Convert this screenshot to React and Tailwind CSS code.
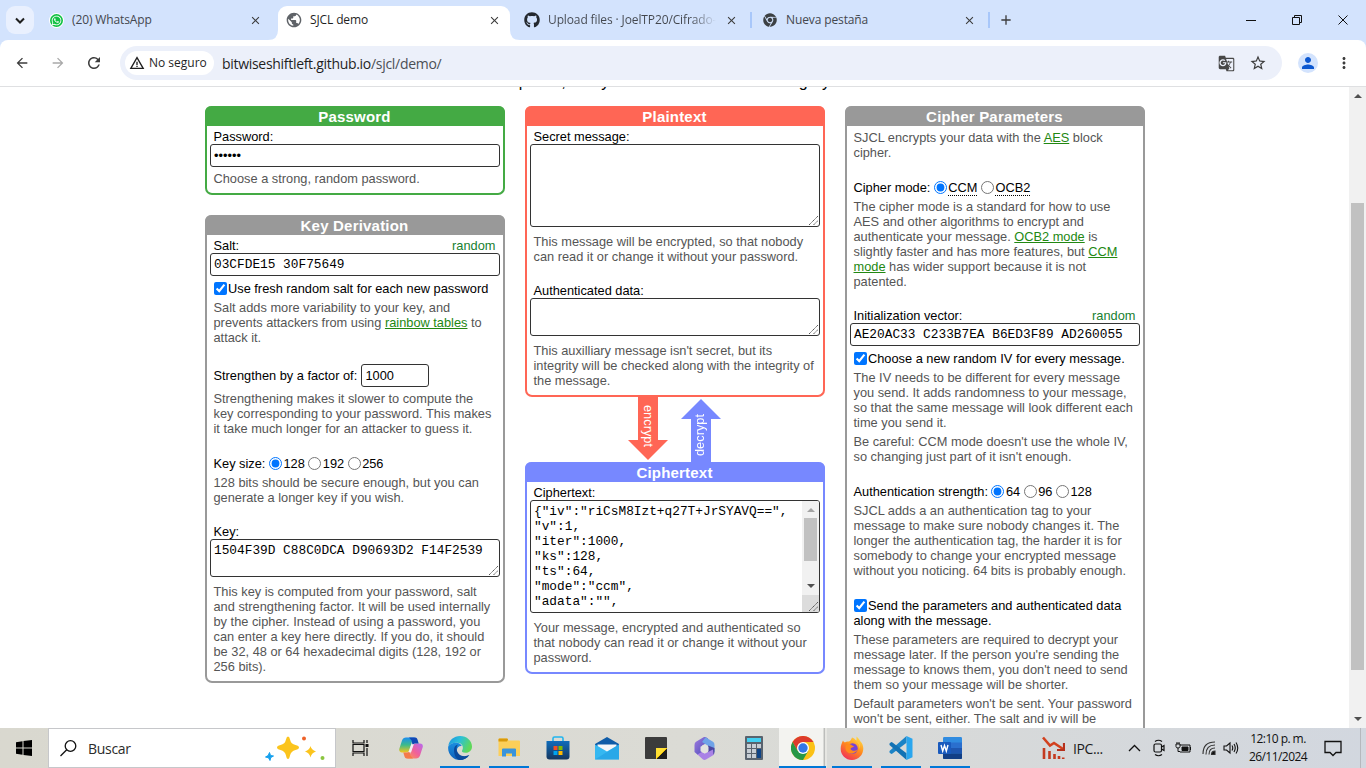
import React from "react";
import { FaWhatsapp, FaGithub, FaChrome } from "react-icons/fa";
import { MdPublic, MdGTranslate, MdPerson, MdStarBorder, MdMoreVert, MdArrowBack, MdArrowForward, MdRefresh, MdWarningAmber, MdClose, MdAdd } from "react-icons/md";

function Lines({ items, className = "" }) {
  return (
    <div className={"px-[6.5px] text-[#555555] " + className}>
      {items.map((t, i) => (
        <div key={i} className="h-[15px] whitespace-nowrap">{t}</div>
      ))}
    </div>
  );
}

function Label({ children, random, className = "" }) {
  return (
    <div className={"flex h-[15px] items-center justify-between whitespace-nowrap pl-[6.5px] pr-[7.5px] text-black " + className}>
      <span>{children}</span>
      {random && <span className="text-[#188030]">random</span>}
    </div>
  );
}

function Link({ children }) {
  return <span className="text-[#228811] underline">{children}</span>;
}

function Panel({ title, head, border, children, className = "" }) {
  return (
    <section className={"w-[300px] rounded-[7px] border-2 border-t-0 " + border + " " + className}>
      <h2 className={"-mx-[2px] flex h-5 items-center justify-center rounded-t-[6px] text-[15px] font-bold tracking-[0.2px] text-white " + head}>
        <span className="pt-px pr-px">{title}</span>
      </h2>
      {children}
    </section>
  );
}

const field = "mx-[3px] block w-[290px] rounded-[3px] border border-[#333333] bg-white outline-none ";
const mono = "font-['Liberation_Mono','Courier_New',monospace] text-[12.8px] text-black ";

function Box({ children, className = "" }) {
  return <div className={field + "flex h-[23px] items-center pl-[3px] whitespace-pre " + className}>{children}</div>;
}

function Grip({ className = "" }) {
  return (
    <svg className={className} width="9" height="9" viewBox="0 0 9 9">
      <path d="M0 9L9 0M4.500 9L9 4.500" stroke="#555" strokeWidth="1" strokeDasharray="1.400 .5" />
    </svg>
  );
}

function Area({ children, className = "" }) {
  return (
    <div className={field + mono + "relative px-[3px] pt-[3px] leading-[15px] whitespace-pre " + className}>
      {children}
      <Grip className="absolute right-[1px] bottom-[1px]" />
    </div>
  );
}

function Radio({ on, children }) {
  return (
    <>
      <input type="radio" defaultChecked={on} className="ml-[3.500px] mr-[1.500px] size-[13px]" />
      <span>{children}</span>
    </>
  );
}

function Check({ children, className = "" }) {
  return (
    <div className={"flex h-[15px] items-center whitespace-nowrap pl-[7px] text-black " + className}>
      <input type="checkbox" defaultChecked className="mr-px size-[13px]" />
      <span>{children}</span>
    </div>
  );
}

function Tab({ icon, title, active, className = "" }) {
  return (
    <div className={"flex h-10 items-center " + className}>
      <span className="flex size-4 items-center justify-center">{icon}</span>
      <span className={"ml-2 grow overflow-hidden text-[12px] tracking-[-0.12px] whitespace-nowrap " + (active ? "text-[#1f1f1f]" : "text-[#43474e]")}>{title}</span>
      <MdClose className="size-[13px] text-[#3c3c3c]" />
    </div>
  );
}

function Slot({ children, on, active }) {
  return (
    <div className="relative flex h-10 w-[49px] items-center justify-center">
      {active && <div className="absolute inset-y-0 left-px w-[44px] bg-[#f3f3f0]" />}
      {active && <div className="absolute inset-y-0 left-[46px] w-[3px] border-l border-[#bcbdbb] bg-[#e6e6e2]" />}
      <div className="relative">{children}</div>
      {on && <div className={"absolute bottom-0 h-[2px] bg-[#0078d7] " + (active ? "inset-x-px" : "inset-x-[4.500px]")} />}
    </div>
  );
}

function Copilot() {
  return (
    <svg width="24" height="24" viewBox="0 0 24 24">
      <defs>
        <linearGradient id="cp1" x1="0" y1="0" x2="0" y2="1"><stop offset="0" stopColor="#1b8df0" /><stop offset=".5" stopColor="#3dbb8a" /><stop offset="1" stopColor="#f4c51b" /></linearGradient>
        <linearGradient id="cp2" x1="1" y1="0" x2="0" y2="1"><stop offset="0" stopColor="#b66af0" /><stop offset=".5" stopColor="#f0609a" /><stop offset="1" stopColor="#ff9d4a" /></linearGradient>
      </defs>
      <path d="M7 1.500h10c-2 0-3 1-3.600 3l-3 9c-.6 2-1.400 3-3.400 3H3c-2.500 0-3.300-2-2.600-4L3 4.500c.7-2 2-3 4-3z" fill="url(#cp1)" />
      <path d="M17 22.500H7c2 0 3-1 3.600-3l3-9c.6-2 1.400-3 3.400-3h4c2.500 0 3.300 2 2.600 4L21 19.500c-.7 2-2 3-4 3z" fill="url(#cp2)" />
      <path d="M10 1.500h6c1.800 0 2.300 1.200 2.800 3l.9 3H17c-2 0-2.800.5-3.400 2l-1-5z" fill="#1248b5" />
      <path d="M14 22.500H8c-1.800 0-2.300-1.200-2.800-3l-.9-3H7c2 0 2.800-.5 3.400-2l1 5z" fill="#f47a4a" />
      <path d="M12.400 8.300h2.400l-2.700 8H9.500z" fill="#f3eef2" />
    </svg>
  );
}

function Edge() {
  return (
    <svg width="24" height="24" viewBox="0 0 24 24">
      <defs>
        <linearGradient id="ed1" x1="0" y1="0" x2="1" y2=".4"><stop offset="0" stopColor="#1c8fe0" /><stop offset=".5" stopColor="#2bc0d8" /><stop offset="1" stopColor="#5fd85a" /></linearGradient>
        <linearGradient id="ed2" x1="0" y1="0" x2="0" y2="1"><stop offset="0" stopColor="#1a8ee0" /><stop offset="1" stopColor="#1160b8" /></linearGradient>
      </defs>
      <path d="M.3 10C1 4.200 6 0 12 0c7 0 12 5 12 10.500 0 4-3 6.300-6.500 6.300-3 0-4.200-1.300-3.300-2.500 1.800-2.500.3-7.500-5-7.500C5 6.800 1.500 8.500.3 10z" fill="url(#ed1)" />
      <path d="M.2 10.500C2 7.500 5.500 6.500 8.500 6.800c2.500.2 4.500 1.500 5.300 3.200-2.500-.5-5 1.500-5 4.500 0 5 6 8 12.500 4.500C19 22.300 15.500 24 12 24 5 24-.6 18 .2 10.500z" fill="url(#ed2)" />
      <path d="M6 14c0-3 1.500-5 4-5.500-2 2-2 5.500 0 8.500 2.500 3.500 7.500 4 11.300 2C19 22.300 15.500 24 12 24c-4-.5-6-5-6-10z" fill="#0b4a9c" />
    </svg>
  );
}

function Explorer() {
  return (
    <svg width="22" height="20" viewBox="0 0 22 20">
      <path d="M.500 1.500a1 1 0 0 1 1-1H9l1.500 2H21a1 1 0 0 1 1 1V18H.5z" fill="#fccf59" />
      <path d="M.500 1.300A1 1 0 0 1 1.500.5H9q1 0 1 1.300L9 3.500H.5z" fill="#d99a0b" />
      <path d="M4 18.500v-7q0-1 1-1h12q1 0 1 1v7h-4v-3H8v3z" fill="#3a94dc" />
    </svg>
  );
}

function Store() {
  return (
    <svg width="24" height="24" viewBox="0 0 24 24">
      <defs><linearGradient id="st" x1="0" y1="0" x2="0" y2="1"><stop offset="0" stopColor="#0f6cbb" /><stop offset="1" stopColor="#16375f" /></linearGradient></defs>
      <path d="M7 6V2.500Q7 1 8.500 1h7Q17 1 17 2.500V6" fill="none" stroke="#22b5ee" strokeWidth="1.600" />
      <path d="M.5 5h23v15.500q0 3-3 3h-17q-3 0-3-3z" fill="url(#st)" />
      <path d="M7.500 10h4v4h-4z" fill="#f25022" /><path d="M12.500 10h4v4h-4z" fill="#7fba00" />
      <path d="M7.500 15h4v4h-4z" fill="#00a4ef" /><path d="M12.500 15h4v4h-4z" fill="#ffb900" />
    </svg>
  );
}

function Mail() {
  return (
    <svg width="24" height="24" viewBox="0 0 24 24">
      <path d="M12 1l12 7v5H0V8z" fill="#0f5ca8" />
      <path d="M2.500 8.500h19V15l-9.500 4-9.500-4z" fill="#f5f7f9" />
      <path d="M0 8.500l12 7 12-7V23.500H0z" fill="#35b8f1" />
      <path d="M24 8.500L0 23.500h24z" fill="#1d97e0" opacity=".5" />
    </svg>
  );
}

function Notes() {
  return (
    <svg width="22" height="22" viewBox="0 0 22 22">
      <rect width="22" height="22" rx="1" fill="#3b3b3b" />
      <path d="M11 11h11L11 22z" fill="#ffdf33" /><path d="M22 11v11H11z" fill="#1f1f1f" />
      <path d="M11 22l1.500-1.500L22 11" stroke="#f5c400" strokeWidth="1" />
    </svg>
  );
}

function Office() {
  return (
    <svg width="21" height="23" viewBox="0 0 21 23">
      <defs><linearGradient id="of" x1="0" y1="0" x2="1" y2="1"><stop offset="0" stopColor="#a07be0" /><stop offset="1" stopColor="#4a4bb8" /></linearGradient></defs>
      <path d="M9.500.3L2 4.800Q.5 5.800.5 8v7l3.500 3 4-2.500V8.500l6-3V1.500L12 .3q-1.200-.7-2.500 0z" fill="url(#of)" />
      <path d="M11.500.2L19 4.800q1.500 1 1.500 3.200v7l-6-3.500V9L8 5z" fill="#6fa3e8" />
      <path d="M14 8.500l6.500 2.500v4q0 2-1.500 3l-5-3z" fill="#4b46a0" />
      <path d="M3.500 17.500l4-2.500 3.500 1.500 8-4 .5 5.500-7.500 4.500q-1.500.8-3 0z" fill="#a982e6" />
      <path d="M10.500 7.500l4 2.300v4.400l-4 2.300-4-2.300V9.800z" fill="#e3e3df" />
    </svg>
  );
}

function Calculator() {
  return (
    <svg width="18" height="24" viewBox="0 0 18 24">
      <rect width="18" height="24" rx="1" fill="#59636e" />
      <rect x="2" y="2" width="14" height="4" fill="#43d0f2" />
      <path d="M2 8h4v4H2zM7 8h4v4H7zM12 8h4v4h-4zM2 13h4v4H2zM7 13h4v4H7zM2 18h4v4H2zM7 18h4v4H7z" fill="#c7ced5" />
      <path d="M12 13h4v9h-4z" fill="#0f4486" />
    </svg>
  );
}

function ChromeColor() {
  return (
    <svg width="24" height="24" viewBox="0 0 24 24">
      <circle cx="12" cy="12" r="12" fill="#fbc116" />
      <path d="M12 12L6.800 15 1.600 6A12 12 0 0 1 22.400 6H12z" fill="#dd3b2c" />
      <path d="M1.600 6A12 12 0 0 0 12 24l5.200-9L12 12l-5.200 3z" fill="#279847" />
      <circle cx="12" cy="12" r="6" fill="#fff" /><circle cx="12" cy="12" r="4.700" fill="#3277e6" />
    </svg>
  );
}

function Firefox() {
  return (
    <svg width="24" height="24" viewBox="0 0 24 24">
      <defs><linearGradient id="ff" x1=".8" y1="0" x2=".2" y2="1"><stop offset="0" stopColor="#ffe14a" /><stop offset=".45" stopColor="#ff8c1c" /><stop offset="1" stopColor="#f12a5c" /></linearGradient></defs>
      <path d="M3 4.500c.5 1 1 1.500 1.800 1.900C6 5.500 7.500 5.200 9 5.500c1.800-1 2.500-2.500 3-4 2 .5 3 2 4.500 3V.5c2 1.500 3 3.500 4 5 2 2 2.800 4.500 2.800 7C23.300 18.800 18.500 24 12 24S.7 19 .7 13c0-3.500 1-6 2.300-8.500z" fill="url(#ff)" />
      <circle cx="12.500" cy="12.500" r="5.200" fill="#7542d6" />
      <path d="M6 9c2-1.500 4.500-1 6 .5 1.200.2 2 .5 2 1-1 1-3 .8-3.500 2.500 1.500 2.500 5 2 7 .5-1 4-9 6-11.500 1-.7-1.700-.7-4 0-5.500z" fill="#ff8a1c" />
      <path d="M15.500 5c3 1.500 4.500 4 3.500 8 2-3 1-7-3.500-8z" fill="#ffd23b" />
    </svg>
  );
}

function VSCode() {
  return (
    <svg width="24" height="24" viewBox="0 0 24 24">
      <path d="M17.500 0v6.800L3.500 17.500 2.300 18 .5 16.500v-1.400z" fill="#1b83c6" />
      <path d="M17.500 24v-6.800L3.500 6.500 2.300 6 .5 7.500v1.400z" fill="#1272b4" />
      <path d="M17.500 0L23.500 2.700v18.600L17.500 24z" fill="#2aa6ee" />
    </svg>
  );
}

function Word() {
  return (
    <svg width="24" height="24" viewBox="0 0 24 24">
      <rect x="5" y="1" width="19" height="22" rx="1.300" fill="#2f8be0" />
      <path d="M5 6.500h19V12H5z" fill="#2a6fce" /><path d="M5 12h19v5.500H5z" fill="#1e56b0" /><path d="M5 17.500h19V22q0 1-1 1H6q-1 0-1-1z" fill="#123f86" />
      <rect x="0" y="6" width="13" height="12" rx="1" fill="#195abd" />
      <path d="M3 9l1.700 6L6.500 9.500 8.300 15 10 9" fill="none" stroke="#fff" strokeWidth="1.400" />
    </svg>
  );
}

function TaskBar() {
  return (
    <footer className="flex h-10 shrink-0 items-center bg-linear-to-r from-[#d9d8cf] via-[#dbdbd5] to-[#d2d7df] font-['Open_Sans','Noto_Sans',sans-serif]">
      <div className="flex w-12 justify-center">
        <svg width="16" height="16" viewBox="0 0 16 16"><path d="M0 2.200L6.500 1.300V7.500H0zM7.500 1.100L16 0V7.500H7.500zM0 8.500H6.500V14.700L0 13.800zM7.500 8.500H16V16L7.500 14.900z" fill="#000" /></svg>
      </div>
      <div className="flex h-10 w-[288px] items-center border border-[#c6c7ca] bg-white pl-[11px]">
        <svg width="17" height="17" viewBox="0 0 17 17" fill="none" stroke="#111" strokeWidth="1.300"><circle cx="10.500" cy="6" r="5.300" /><path d="M6.700 9.800L.5 16" /></svg>
        <span className="ml-[11px] grow text-[14px] tracking-[-0.3px] text-[#2b2b2b]">Buscar</span>
        <svg width="62" height="26" viewBox="0 0 62 26" className="mr-[9px]">
          <path d="M24 1.500q1.500 0 2 3 1 4.500 5.500 5.500 3.500.8 3.500 2.500t-3.500 2.500q-4.500 1-5.500 5.500-.7 3.500-2 3.500t-2-3.500q-1-4.500-5.500-5.500-3.500-.8-3.500-2.500t3.500-2.500q4.500-1 5.500-5.500.6-3 2-3z" fill="#fbc41d" />
          <path d="M46.500 11q.8 3.800 5.500 5.500-4.700 1.500-5.500 6-.8-4.500-5.500-6 4.700-1.700 5.500-5.500z" fill="#fbc41d" />
          <path d="M5.500 17.500l1 3 3 .5-2.700 1.500-.8 3-1.500-2.700-3-.8 2.700-1.500z" fill="#14a0ee" stroke="#14a0ee" strokeLinejoin="round" />
          <circle cx="40" cy="3.500" r="2" fill="#ee6128" /><circle cx="58.500" cy="23" r="2" fill="#8bc540" />
        </svg>
      </div>
      <div className="flex w-[50px] justify-center pr-[2px]">
        <svg width="17" height="16" viewBox="0 0 17 16" fill="none" stroke="#111" strokeWidth="1.200"><path d="M1 0v3h11V0M1 16v-3h11v3M1 4.500h11v7H1z" /><path d="M15 0v3M15 8v8" /><path d="M13.500 4h3v3h-3z" fill="#111" stroke="none" /></svg>
      </div>
      <Slot><Copilot /></Slot>
      <Slot on><Edge /></Slot>
      <Slot on><Explorer /></Slot>
      <Slot><Store /></Slot>
      <Slot><Mail /></Slot>
      <Slot><Notes /></Slot>
      <Slot><Office /></Slot>
      <Slot><Calculator /></Slot>
      <Slot on active><ChromeColor /></Slot>
      <Slot on><Firefox /></Slot>
      <Slot on><VSCode /></Slot>
      <Slot on><Word /></Slot>
      <svg className="ml-[68px] shrink-0" width="23" height="24" viewBox="0 0 23 24" fill="none">
        <path d="M1 1.500l7 8 4-2.500 9 6" stroke="#d2401e" strokeWidth="2.600" /><path d="M15 14H22V7" stroke="#b5301c" strokeWidth="2.200" />
        <path d="M2 12v11M7.500 15v8M12.500 18v5M17 20v3M21.200 21.500V23" stroke="#c43a20" strokeWidth="2.600" />
      </svg>
      <span className="ml-2 w-8 text-[14px] tracking-[-0.4px] text-[#1b1b1b]">IPC...</span>
      <svg className="ml-[23px] shrink-0" width="13" height="8" viewBox="0 0 13 8" fill="none" stroke="#111" strokeWidth="1.300"><path d="M1 7l5.500-5.500L12 7" /></svg>
      <svg className="ml-[12px] shrink-0" width="12" height="18" viewBox="0 0 12 18" fill="none" stroke="#111" strokeWidth="1.200"><rect x="1" y="5" width="7.500" height="8" rx="1.500" /><path d="M8.500 8l2.500-1.500v5L8.500 10M2 2.500Q5.500 0 9 2.500M2 15.500Q5.500 18 9 15.500" /></svg>
      <svg className="ml-[10px] shrink-0" width="17" height="14" viewBox="0 0 17 14" fill="none" stroke="#111"><path d="M5 4h10v7H5M15.500 6v3M1 3h4v2.500q0 1.500-2 1.500t-2-1.500zM2 3V1M4 3V1M3 7v3.500h2" /><path d="M7 6h6v3.500H7z" fill="#111" /></svg>
      <svg className="ml-[10px] shrink-0" width="14" height="14" viewBox="0 0 14 14" fill="none" stroke="#333" strokeWidth="1.100"><path d="M1 13Q1 1 13 1M4 13.500Q4 4 13 4M7 13.500Q7 7 13 7" /><path d="M9.500 13.500Q9.500 10 13 10v3.500z" fill="#111" /></svg>
      <svg className="ml-[7px] shrink-0" width="17" height="14" viewBox="0 0 17 14" fill="none" stroke="#111" strokeWidth="1.100"><path d="M1 5h2.500L7 2v10L3.500 9H1zM9 4.500q1.500 2.500 0 5M11 3q2.500 4 0 8M13 1.500q3.500 5.500 0 11" /></svg>
      <div className="ml-[5px] flex w-[66px] flex-col items-center text-[12px] leading-[18px] tracking-[-0.55px] whitespace-nowrap text-[#111]">
        <span>12:10 p. m.</span>
        <span>26/11/2024</span>
      </div>
      <svg className="ml-[13px] shrink-0" width="18" height="17" viewBox="0 0 18 17" fill="none" stroke="#111" strokeWidth="1.300"><path d="M1 1.500h16v11h-5l-3 3-3-3H1z" /></svg>
      <div className="ml-[18px] h-10 w-px bg-[#b5b8bd]" />
    </footer>
  );
}

export default function App() {
  return (
    <div className="flex h-[768px] w-[1366px] flex-col overflow-hidden bg-white font-['Liberation_Sans',Arial,sans-serif]">
      <header className="shrink-0 bg-[#d3e3fd] font-['Open_Sans','Noto_Sans',sans-serif]">
        <div className="flex h-10 items-center">
          <div className="ml-[6px] flex size-7 items-center justify-center rounded-[9px] bg-[#e9f0fe]">
            <svg width="10" height="7" viewBox="0 0 10 7" fill="none" stroke="#1f1f1f" strokeWidth="2"><path d="M1 1.500l4 4 4-4" /></svg>
          </div>
          <Tab className="ml-[14px] w-[214px]" title="(20) WhatsApp" icon={<span className="flex size-[13px] items-center justify-center rounded-full bg-[#10c143] ring-1 ring-white"><FaWhatsapp className="size-[11px] text-white" /></span>} />
          <div className="relative ml-[16px] flex h-[34px] w-[232px] self-end rounded-t-[9px] bg-white">
            <svg className="absolute -left-[10px] bottom-0" width="10" height="10"><path d="M10 0v10H0Q10 10 10 0z" fill="#fff" /></svg>
            <svg className="absolute -right-[10px] bottom-0" width="10" height="10"><path d="M0 0v10h10Q0 10 0 0z" fill="#fff" /></svg>
            <Tab active className="-mt-[6px] ml-[8px] w-[215px]" title="SJCL demo" icon={<MdPublic className="size-4 shrink-0 scale-110 text-[#5f6368]" />} />
          </div>
          <Tab className="ml-[14px] w-[214px]" title={<span className="bg-linear-to-r from-[#43474e] from-85% to-[#d3e3fd] bg-clip-text text-transparent">Upload files · JoelTP20/Cifrado-</span>} icon={<FaGithub className="size-4 text-[#24292f]" />} />
          <div className="ml-[12px] h-4 w-[2px] bg-[#a8c7fa]" />
          <Tab className="ml-[10px] w-[214px]" title="Nueva pestaña" icon={<FaChrome className="size-[14px] text-[#3c4043]" />} />
          <div className="ml-[12px] h-4 w-[2px] bg-[#a8c7fa]" />
          <MdAdd className="ml-[8px] size-4 text-[#3c3c3c]" />
          <svg className="ml-[232px]" width="103" height="12" viewBox="0 0 103 12" fill="none" stroke="#111"><path d="M0 6.500h10M46.500 3.500h7v7h-7zM48.500 3.500v-2h7v7h-2M92.500 1.500l9 9M101.500 1.500l-9 9" /></svg>
        </div>
        <div className="flex h-[46px] items-center rounded-t-[8px] bg-white">
          <MdArrowBack className="ml-[14px] size-4 text-[#3c3c3c]" />
          <MdArrowForward className="ml-[20px] size-4 text-[#a9a9a9]" />
          <MdRefresh className="ml-[19px] size-[18px] text-[#3c3c3c]" />
          <div className="ml-[17px] flex h-[34px] w-[1162px] items-center rounded-full bg-[#ecf0fa] pl-[5px]">
            <div className="flex h-6 w-[89px] items-center rounded-full bg-white pl-[4px] text-[12px] font-medium text-[#1f1f1f]">
              <MdWarningAmber className="mr-[4px] size-4 shrink-0" />
              <span className="whitespace-nowrap">No seguro</span>
            </div>
            <span className="ml-2 grow text-[14px] tracking-[-0.3px] text-[#1f1f1f]">bitwiseshiftleft.github.io<span className="text-[#4b4f55]">/sjcl/demo/</span></span>
            <MdGTranslate className="size-[17px] text-[#474747]" />
            <MdStarBorder className="mr-[15px] ml-[14px] size-[18px] text-[#3c3c3c]" />
          </div>
          <div className="ml-[16px] flex size-5 items-center justify-center rounded-full bg-[#d3e3fd]"><MdPerson className="size-[18px] text-[#0b57d0]" /></div>
          <MdMoreVert className="ml-[17px] size-[18px] text-[#3c3c3c]" />
        </div>
      </header>
      <div className="h-px shrink-0 bg-[#dfe0e2]" />

      <main className="flex min-h-0 grow overflow-hidden text-[12.8px] leading-[15px]">
        <div className="flex h-full w-[1349px] flex-col overflow-hidden">
          <div className="-mt-[14px] flex h-[16px] shrink-0 items-center justify-center pr-[119px] text-[16px] whitespace-nowrap text-black">SJCL has lots of other options, many of which are shown in the grey boxes.</div>
          <div className="mt-[17px] flex items-start gap-5 pl-[205px]">
            <div className="flex flex-col gap-5">
              <Panel title="Password" head="bg-[#44aa44]" border="border-[#44aa44]" className="h-[89px]">
                <Label className="mt-[3px]">Password:</Label>
                <Box>••••••</Box>
                <Lines className="mt-[4px]" items={["Choose a strong, random password."]} />
              </Panel>
              <Panel title="Key Derivation" head="bg-[#999999]" border="border-[#999999]" className="h-[468px]">
                <Label className="mt-[3px]" random>Salt:</Label>
                <Box className={mono}>03CFDE15 30F75649</Box>
                <Check className="mt-[5px]">Use fresh random salt for each new password</Check>
                <Lines className="mt-[4px]" items={["Salt adds more variability to your key, and", <>prevents attackers from using <Link>rainbow tables</Link> to</>, "attack it."]} />
                <div className="mt-[19px] flex h-[23px] items-center pl-[6.5px] text-black">
                  <span className="w-[147.500px] whitespace-nowrap">Strengthen by a factor of:</span>
                  <div className="flex h-[23px] w-[68px] items-center rounded-[3px] border border-[#333333] pl-[3.500px]">1000</div>
                </div>
                <Lines className="mt-[4px]" items={["Strengthening makes it slower to compute the", "key corresponding to your password. This makes", "it take much longer for an attacker to guess it."]} />
                <div className="mt-[20px] flex h-[15px] items-center pl-[6.5px] whitespace-nowrap text-black">
                  <span>Key size:</span><Radio on>128</Radio><Radio>192</Radio><Radio>256</Radio>
                </div>
                <Lines className="mt-[4px]" items={["128 bits should be secure enough, but you can", "generate a longer key if you wish."]} />
                <Label className="mt-[19px]">Key:</Label>
                <Area className="h-[38px]">1504F39D C88C0DCA D90693D2 F14F2539</Area>
                <Lines className="mt-[7px]" items={["This key is computed from your password, salt", "and strengthening factor. It will be used internally", "by the cipher. Instead of using a password, you", "can enter a key here directly. If you do, it should", "be 32, 48 or 64 hexadecimal digits (128, 192 or", "256 bits)."]} />
              </Panel>
            </div>

            <div className="flex flex-col">
              <Panel title="Plaintext" head="bg-[#ff6655]" border="border-[#ff6655]" className="h-[291px]">
                <Label className="mt-[3px]">Secret message:</Label>
                <Area className="h-[83px]" />
                <Lines className="mt-[7px]" items={["This message will be encrypted, so that nobody", "can read it or change it without your password."]} />
                <Label className="mt-[19px]">Authenticated data:</Label>
                <Area className="h-[38px]" />
                <Lines className="mt-[7px]" items={["This auxilliary message isn't secret, but its", "integrity will be checked along with the integrity of", "the message."]} />
              </Panel>
              <div className="flex h-[65px] gap-[13px] pl-[103px] text-[12.8px] text-white">
                <div className="relative flex h-[63px] w-10 justify-center">
                  <svg className="absolute inset-0" width="40" height="63"><path d="M10 0H30V43H40L20 63 0 43H10z" fill="#ff6655" /></svg>
                  <span className="relative mt-[8px] ml-px h-[42px] [writing-mode:vertical-rl]">encrypt</span>
                </div>
                <div className="relative flex h-[65px] w-10 justify-center">
                  <svg className="absolute inset-0" width="40" height="65"><path d="M10 65H30V22H40L20 2 0 22H10z" fill="#7788ff" /></svg>
                  <span className="relative mt-[17px] mr-[4px] h-[42px] rotate-180 [writing-mode:vertical-rl]">decrypt</span>
                </div>
              </div>
              <Panel title="Ciphertext" head="bg-[#7788ff]" border="border-[#7788ff]" className="h-[212px]">
                <Label className="mt-[3px]">Ciphertext:</Label>
                <div className={field + mono + "flex h-[113px] overflow-hidden leading-[15px]"}>
                  <pre className="grow pt-[3px] pl-[3px] font-['Liberation_Mono','Courier_New',monospace]">{'{"iv":"riCsM8Izt+q27T+JrSYAVQ==",\n"v":1,\n"iter":1000,\n"ks":128,\n"ts":64,\n"mode":"ccm",\n"adata":"",'}</pre>
                  <div className="flex w-[17px] flex-col items-center bg-[#f1f1f1]">
                    <svg className="h-[17px] shrink-0" width="8" height="17"><path d="M0 11L4 7l4 4z" fill="#a3a3a3" /></svg>
                    <div className="h-[43px] w-[13px] shrink-0 bg-[#c1c1c1]" />
                    <svg className="mt-[17px] shrink-0" width="8" height="17"><path d="M0 6h8l-4 4z" fill="#505050" /></svg>
                    <div className="flex grow items-end justify-end self-stretch bg-[#dcdcdc] p-px">
                      <Grip />
                    </div>
                  </div>
                </div>
                <Lines className="mt-[7px]" items={["Your message, encrypted and authenticated so", "that nobody can read it or change it without your", "password."]} />
              </Panel>
            </div>

            <Panel title="Cipher Parameters" head="bg-[#999999]" border="border-[#999999]" className="h-[660px]">
              <Lines className="mt-[4px]" items={[<>SJCL encrypts your data with the <Link>AES</Link> block</>, "cipher."]} />
              <div className="mt-[20px] flex h-[15px] items-center pl-[6.5px] whitespace-nowrap text-black">
                <span>Cipher mode:</span>
                <Radio on><span className="border-b border-dotted border-black">CCM</span></Radio>
                <Radio><span className="border-b border-dotted border-black">OCB2</span></Radio>
              </div>
              <Lines className="mt-[4px]" items={["The cipher mode is a standard for how to use", "AES and other algorithms to encrypt and", <>authenticate your message. <Link>OCB2 mode</Link> is</>, <>slightly faster and has more features, but <Link>CCM</Link></>, <><Link>mode</Link> has wider support because it is not</>, "patented."]} />
              <Label className="mt-[19px]" random>Initialization vector:</Label>
              <Box className={mono}>AE20AC33 C233B7EA B6ED3F89 AD260055</Box>
              <Check className="mt-[5px]">Choose a new random IV for every message.</Check>
              <Lines className="mt-[4px]" items={["The IV needs to be different for every message", "you send. It adds randomness to your message,", "so that the same message will look different each", "time you send it."]} />
              <Lines className="mt-[4px]" items={["Be careful: CCM mode doesn't use the whole IV,", "so changing just part of it isn't enough."]} />
              <div className="mt-[20px] flex h-[15px] items-center pl-[6.5px] whitespace-nowrap text-black">
                <span>Authentication strength:</span><Radio on>64</Radio><Radio>96</Radio><Radio>128</Radio>
              </div>
              <Lines className="mt-[4px]" items={["SJCL adds a an authentication tag to your", "message to make sure nobody changes it. The", "longer the authentication tag, the harder it is for", "somebody to change your encrypted message", "without you noticing. 64 bits is probably enough."]} />
              <Check className="mt-[20px]">Send the parameters and authenticated data</Check>
              <div className="h-[15px] pl-[6.5px] text-black">along with the message.</div>
              <Lines className="mt-[4px]" items={["These parameters are required to decrypt your", "message later. If the person you're sending the", "message to knows them, you don't need to send", "them so your message will be shorter."]} />
              <Lines className="mt-[4px]" items={["Default parameters won't be sent. Your password", "won't be sent, either. The salt and iv will be"]} />
            </Panel>
          </div>
        </div>
        <div className="flex w-[17px] flex-col items-center bg-[#f1f1f1]">
          <svg className="shrink-0" width="8" height="17"><path d="M0 11L4 7l4 4z" fill="#505050" /></svg>
          <div className="mt-[99px] h-[467px] w-[13px] shrink-0 bg-[#c1c1c1]" />
          <svg className="mt-auto shrink-0" width="8" height="17"><path d="M0 6h8l-4 4z" fill="#505050" /></svg>
        </div>
      </main>
      <TaskBar />
    </div>
  );
}
